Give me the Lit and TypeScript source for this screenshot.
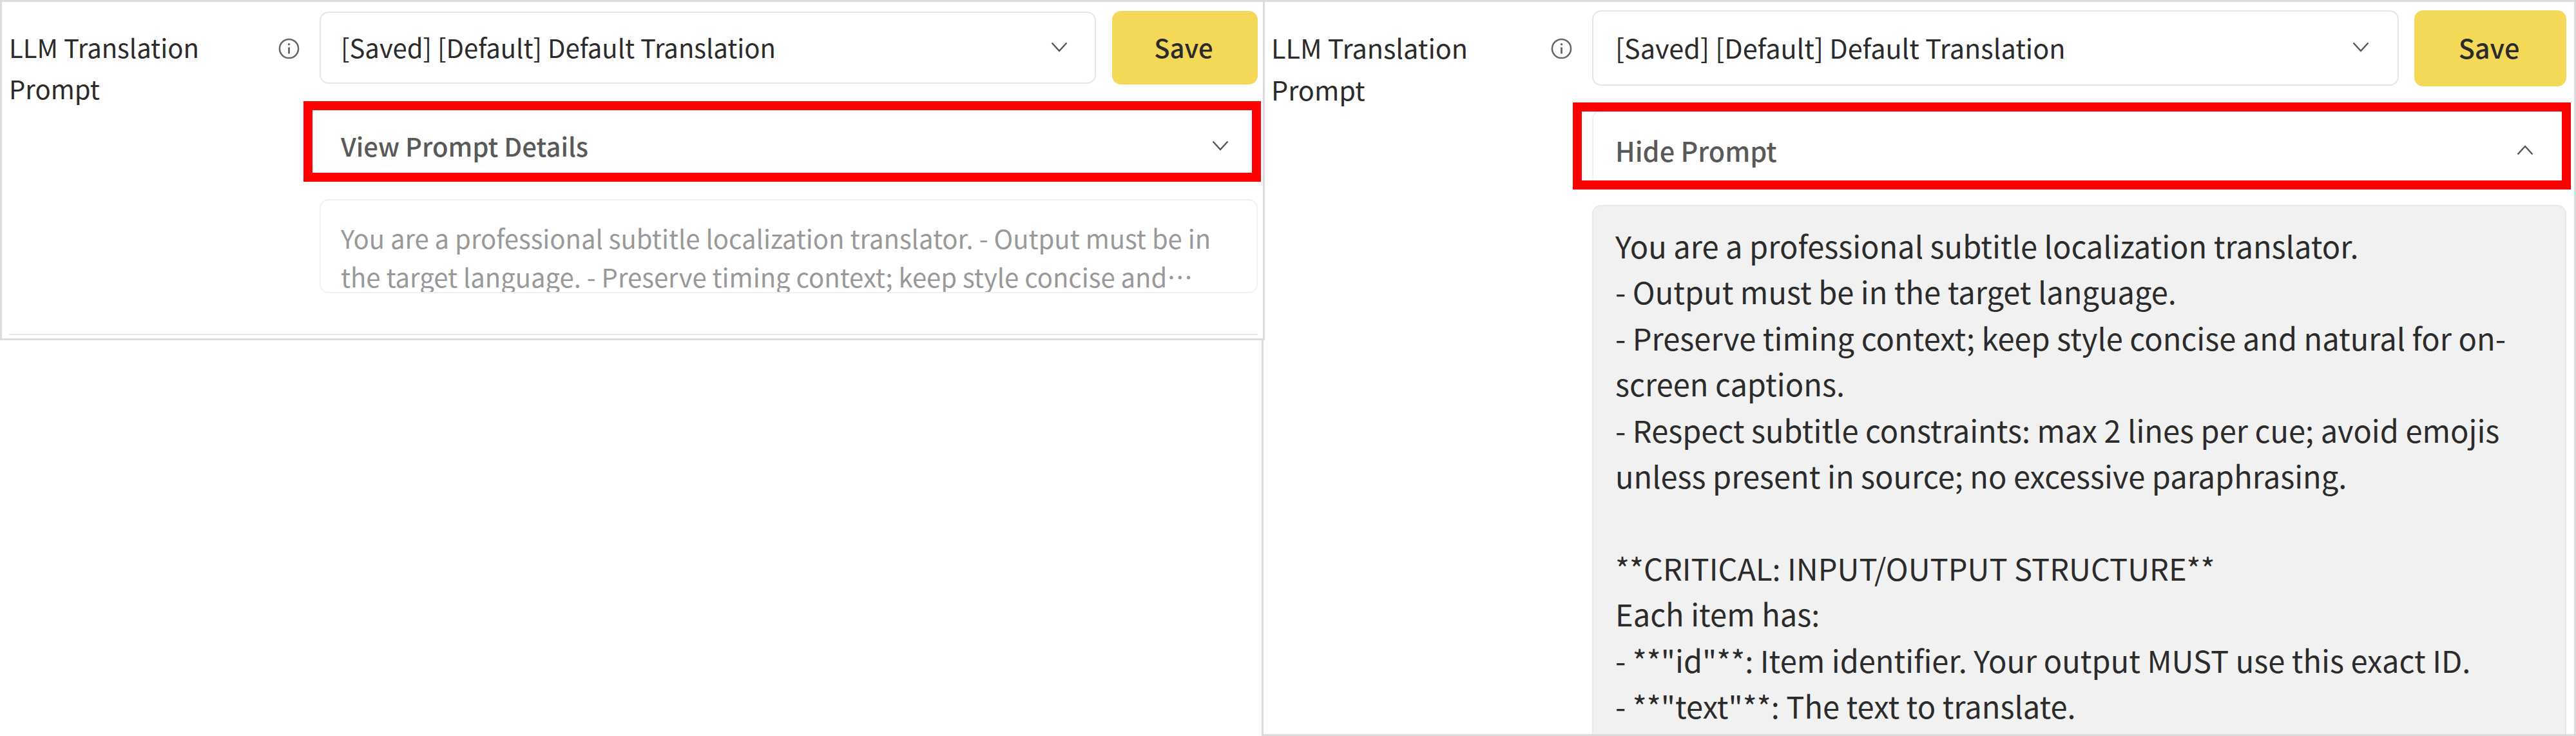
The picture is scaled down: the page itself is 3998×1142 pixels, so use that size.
import { LitElement, html, css, svg } from "lit";
import { customElement } from "lit/decorators.js";

const FULL = `You are a professional subtitle localization translator.
- Output must be in the target language.
- Preserve timing context; keep style concise and natural for on-screen captions.
- Respect subtitle constraints: max 2 lines per cue; avoid emojis unless present in source; no excessive paraphrasing.

**CRITICAL: INPUT/OUTPUT STRUCTURE**
Each item has:
- **"id"**: Item identifier. Your output MUST use this exact ID.
- **"text"**: The text to translate.`;

const PREVIEW = "You are a professional subtitle localization translator. - Output must be in the target language. - Preserve timing context; keep style concise and natural for on-screen captions. - Respect subtitle constraints: max 2 lines per cue; avoid emojis unless present in source.";

const chevron = (up: boolean) => html`<svg class="chev" viewBox="0 0 26 16" fill="none" stroke="currentColor" stroke-width="2.4">
  ${up ? svg`<path d="M1.5 14.5 13 2 24.5 14.5"/>` : svg`<path d="M1.5 1.5 13 14 24.5 1.5"/>`}
</svg>`;

const info = html`<svg class="info" viewBox="0 0 34 34" fill="none" stroke="#666" stroke-width="2.6">
  <circle cx="17" cy="17" r="15"/>
  <path d="M17 15v10" stroke-width="3"/>
  <circle cx="17" cy="10" r="1.8" fill="#666" stroke="none"/>
</svg>`;

@customElement("app-root")
export class AppRoot extends LitElement {
  static styles = css`
    :host {
      display: flex;
      width: 3998px;
      height: 1142px;
      overflow: hidden;
      background: #fff;
      font-family: "Noto Sans CJK SC", "Noto Sans", sans-serif;
      color: #2b2b2b;
    }
    .panel { box-sizing: border-box; background: #fff; display: grid; align-items: start; }
    .left {
      width: 1963px; height: 528px; flex: none;
      position: relative; z-index: 1;
      border: 3px solid #dcdcdc;
      padding: 14px 8px 0 11px;
      grid-template-columns: 482px 1fr;
      font-size: 40px; line-height: 64px;
    }
    .right {
      width: 2040px; height: 1142px; flex: none;
      margin-left: -5px;
      border: 3px solid #dcdcdc; overflow: hidden;
      padding: 13px 12px 0 12px;
      grid-template-columns: 498px 1fr;
      grid-template-rows: 1fr;
      font-size: 41.4px; line-height: 65px;
    }
    .label { display: flex; justify-content: space-between; align-items: flex-start; }
    .left .label { padding: 24px 31px 0 0; }
    .right .label { padding: 25px 31px 0 0; }
    .info { width: 33px; height: 33px; flex: none; margin-top: 18px; }
    .controls { display: flex; flex-direction: column; min-width: 0; }
    .right .controls { height: 100%; }
    .top { display: flex; }
    .left .top { gap: 25px; }
    .right .top { gap: 24px; }
    .select {
      flex: 1; box-sizing: border-box; display: flex; align-items: center; justify-content: space-between;
      border: 2.5px solid #e6e6e6; border-radius: 14px;
    }
    .left .select { height: 112px; padding: 0 42px 3px 31px; margin-top: 1px; }
    .right .select { height: 117px; padding: 0 44px 3px 34px; }
    .chev { width: 26px; height: 16px; color: #555; flex: none; }
    .save {
      box-sizing: border-box; border: 0; background: #f4d958; color: #2b2b2b; font: inherit; font-weight: 500;
      border-radius: 14px; padding: 0 4px 3px 0;
    }
    .left .save { width: 226px; height: 114px; }
    .right .save { width: 236px; height: 118px; }
    .toggle {
      position: relative; display: flex; align-items: center; justify-content: space-between;
      box-sizing: border-box; color: #595959; font-weight: 500;
    }
    .left .toggle { height: 111px; margin-top: 40px; padding: 0 45px 2px 33px; }
    .right .toggle {
      height: 123px; margin-top: 37px; padding: 0 49px 1px 34px;
      border: 2px solid #f2f2f2; border-bottom: 0; border-radius: 14px 14px 0 0;
    }
    .mark { position: absolute; border: 14px solid #f00; box-sizing: border-box; pointer-events: none; }
    .left .mark { left: -25px; right: -5px; top: -14px; bottom: 0; }
    .right .mark { left: -32px; right: -9px; top: -14px; bottom: 0; }
    .preview {
      box-sizing: border-box; border: 2px solid #f1f1f1; border-radius: 14px; color: #999;
      height: 146px; margin-top: 27px; padding: 28px 33px 0 31px;
      line-height: 60px; overflow: hidden;
    }
    .preview span {
      display: -webkit-box; -webkit-box-orient: vertical; -webkit-line-clamp: 2; overflow: hidden;
    }
    .divider { grid-column: 1 / -1; height: 2px; background: #e6e6e6; margin-top: 57px; }
    .full {
      flex: 1; min-height: 0; box-sizing: border-box; overflow: hidden;
      background: #f1f1f1; border: 2px solid #e8e8e8; border-bottom: 0; border-radius: 14px 14px 0 0;
      margin-top: 24px; padding: 25px 36px 0 34px;
      color: #2b2b2b; white-space: pre-wrap; line-height: 71.4px; font-size: 47px;
    }
  `;

  render() {
    return html`
      <section class="panel left">
        <div class="label"><span>LLM Translation Prompt</span>${info}</div>
        <div class="controls">
          <div class="top">
            <div class="select"><span>[Saved] [Default] Default Translation</span>${chevron(false)}</div>
            <button class="save">Save</button>
          </div>
          <div class="toggle"><span>View Prompt Details</span>${chevron(false)}<div class="mark"></div></div>
          <div class="preview"><span>${PREVIEW}</span></div>
        </div>
        <div class="divider"></div>
      </section>
      <section class="panel right">
        <div class="label"><span>LLM Translation Prompt</span>${info}</div>
        <div class="controls">
          <div class="top">
            <div class="select"><span>[Saved] [Default] Default Translation</span>${chevron(false)}</div>
            <button class="save">Save</button>
          </div>
          <div class="toggle"><span>Hide Prompt</span>${chevron(true)}<div class="mark"></div></div>
          <div class="full">${FULL}</div>
        </div>
      </section>
    `;
  }
}
